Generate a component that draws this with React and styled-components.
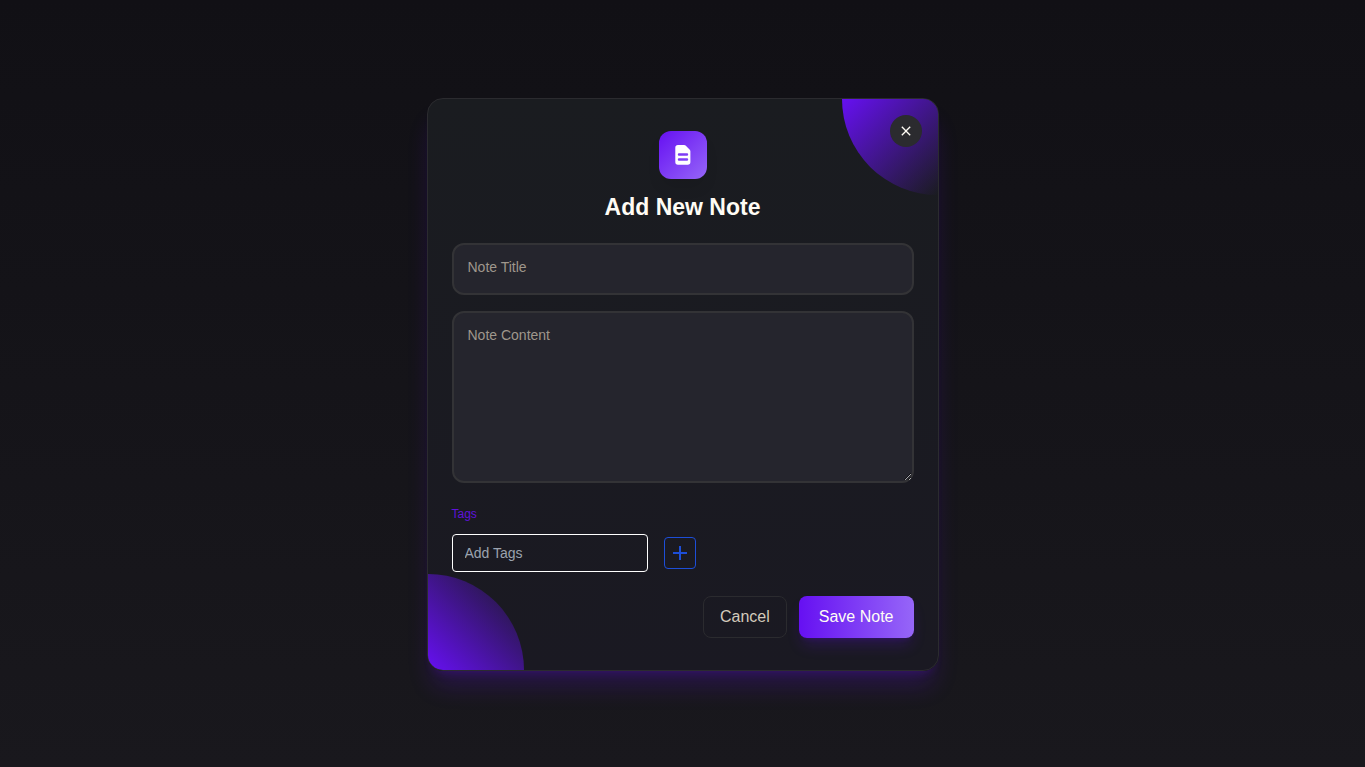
import React, { useState } from 'react';
import styled, { createGlobalStyle } from 'styled-components';

const GlobalStyle = createGlobalStyle`
  * {
    box-sizing: border-box;
  }

  body {
    margin: 0;
    background: #121116;
    font-family: 'Liberation Sans', Arial, sans-serif;
  }
`;

const App = () => {
  const [title, setTitle] = useState('');
  const [content, setContent] = useState('');
  const [tag, setTag] = useState('');

  return (
    <>
      <GlobalStyle />
      <Page>
        <Modal role="dialog" aria-labelledby="note-heading">
          <TopCorner />
          <BottomCorner />
          <CloseButton type="button" aria-label="Close">
            <svg width="16" height="16" viewBox="0 0 24 24" fill="currentColor">
              <path d="M19 6.41L17.59 5 12 10.59 6.41 5 5 6.41 10.59 12 5 17.59 6.41 19 12 13.41 17.59 19 19 17.59 13.41 12z" />
            </svg>
          </CloseButton>

          <Header>
            <IconBox>
              <svg width="24" height="24" viewBox="0 0 24 24" fill="currentColor">
                <path
                  fillRule="evenodd"
                  d="M7 2h6.2a2 2 0 0 1 1.4.6l4.2 4.2a2 2 0 0 1 .6 1.4V19a2.7 2.7 0 0 1-2.7 2.7H7A2.7 2.7 0 0 1 4.3 19V4.7A2.7 2.7 0 0 1 7 2zM8 10.3a1.2 1.2 0 0 0 0 2.4h8a1.2 1.2 0 0 0 0-2.4zM8 15.3a1.2 1.2 0 0 0 0 2.4h8a1.2 1.2 0 0 0 0-2.4z"
                />
              </svg>
            </IconBox>
            <Title id="note-heading">Add New Note</Title>
          </Header>

          <Form onSubmit={(e) => e.preventDefault()}>
            <TitleInput
              type="text"
              aria-label="Note Title"
              placeholder="Note Title"
              value={title}
              onChange={(e) => setTitle(e.target.value)}
            />
            <ContentInput
              aria-label="Note Content"
              placeholder="Note Content"
              value={content}
              onChange={(e) => setContent(e.target.value)}
            />

            <TagSection>
              <TagLabel htmlFor="tag">Tags</TagLabel>
              <TagRow>
                <TagInput
                  id="tag"
                  type="text"
                  placeholder="Add Tags"
                  value={tag}
                  onChange={(e) => setTag(e.target.value)}
                />
                <AddButton type="button" aria-label="Add tag">
                  <svg width="24" height="24" viewBox="0 0 24 24" fill="currentColor">
                    <path d="M19 13h-6v6h-2v-6H5v-2h6V5h2v6h6z" />
                  </svg>
                </AddButton>
              </TagRow>
            </TagSection>

            <Actions>
              <CancelButton type="button">Cancel</CancelButton>
              <SaveButton type="submit">Save Note</SaveButton>
            </Actions>
          </Form>
        </Modal>
      </Page>
    </>
  );
};

export default App;

// Styled Components
const Page = styled.main`
  display: flex;
  align-items: center;
  justify-content: center;
  min-height: 100vh;
  padding: 18px 16px 16px;
  background: linear-gradient(to bottom, #111015, #19181d);
`;

const Modal = styled.section`
  position: relative;
  width: 100%;
  max-width: 512px;
  padding: 32px 24px;
  overflow: hidden;
  border: 1px solid #2b2b2f;
  border-radius: 16px;
  background: linear-gradient(to bottom, #1a1c20, #1a1922);
  box-shadow: 0 20px 25px -5px rgba(106, 17, 251, 0.2),
    0 8px 10px -6px rgba(106, 17, 251, 0.2);
`;

const Corner = styled.div`
  position: absolute;
  width: 96px;
  height: 96px;
  pointer-events: none;
`;

const TopCorner = styled(Corner)`
  top: 0;
  right: 0;
  border-bottom-left-radius: 100%;
  background: linear-gradient(to bottom right, #6610f2, transparent);
`;

const BottomCorner = styled(Corner)`
  bottom: 0;
  left: 0;
  border-top-right-radius: 100%;
  background: linear-gradient(to top right, #6610f2, transparent);
`;

const CloseButton = styled.button`
  position: absolute;
  top: 16px;
  right: 16px;
  display: flex;
  align-items: center;
  justify-content: center;
  width: 32px;
  height: 32px;
  padding: 0;
  border: none;
  border-radius: 50%;
  background: #2b2b2f;
  color: #fffcf5;
  cursor: pointer;
`;

const Header = styled.header`
  display: flex;
  flex-direction: column;
  align-items: center;
  gap: 12px;
  margin-bottom: 20px;
`;

const IconBox = styled.div`
  display: flex;
  align-items: center;
  justify-content: center;
  width: 48px;
  height: 48px;
  border-radius: 12px;
  background: linear-gradient(to bottom right, #6610f2, #9666f8);
  box-shadow: 0 10px 15px -3px rgba(0, 0, 0, 0.1);
  color: #fff;
`;

const Title = styled.h1`
  margin: 0;
  color: #fffcf5;
  font-size: 23px;
  line-height: 32px;
`;

const Form = styled.form`
  display: flex;
  flex-direction: column;
`;

const TitleInput = styled.input`
  height: 52px;
  margin-bottom: 16px;
  padding: 8px 14px 12px;
  border: 2px solid #333336;
  border-radius: 12px;
  outline: none;
  background: #25252d;
  color: #fffcf5;
  font-family: inherit;
  font-size: 14px;

  &::placeholder {
    color: #9f978c;
  }
`;

const ContentInput = styled(TitleInput).attrs({ as: 'textarea' })`
  height: 172px;
  padding: 12px 14px;
  line-height: 20px;
  resize: vertical;
`;

const TagSection = styled.div`
  display: flex;
  flex-direction: column;
  gap: 12px;
  margin: 7px 0 24px;
`;

const TagLabel = styled.label`
  color: #5f12dc;
  font-size: 12px;
  line-height: 16px;
`;

const TagRow = styled.div`
  display: flex;
  align-items: center;
  gap: 16px;
`;

const TagInput = styled.input`
  width: 196px;
  height: 38px;
  padding: 8px 12px;
  border: 1px solid #fff;
  border-radius: 4px;
  outline: none;
  background: transparent;
  color: #fff;
  font-family: inherit;
  font-size: 14px;

  &::placeholder {
    color: #9ca3af;
  }
`;

const AddButton = styled.button`
  display: flex;
  align-items: center;
  justify-content: center;
  width: 32px;
  height: 32px;
  padding: 0;
  border: 1px solid #1d4ed8;
  border-radius: 4px;
  background: transparent;
  color: #1d4ed8;
  cursor: pointer;
`;

const Actions = styled.div`
  display: flex;
  justify-content: flex-end;
  gap: 12px;
`;

const Button = styled.button`
  height: 42px;
  border-radius: 8px;
  font-family: inherit;
  font-size: 16px;
  cursor: pointer;
`;

const CancelButton = styled(Button)`
  padding: 0 16px;
  border: 1px solid #2b2b2f;
  background: transparent;
  color: #d3cabb;
`;

const SaveButton = styled(Button)`
  padding: 0 20px;
  border: none;
  background: linear-gradient(to right, #6610f2, #9666f8);
  box-shadow: 0 10px 15px -3px rgba(106, 17, 251, 0.2),
    0 4px 6px -4px rgba(106, 17, 251, 0.2);
  color: #fffcf5;
`;
